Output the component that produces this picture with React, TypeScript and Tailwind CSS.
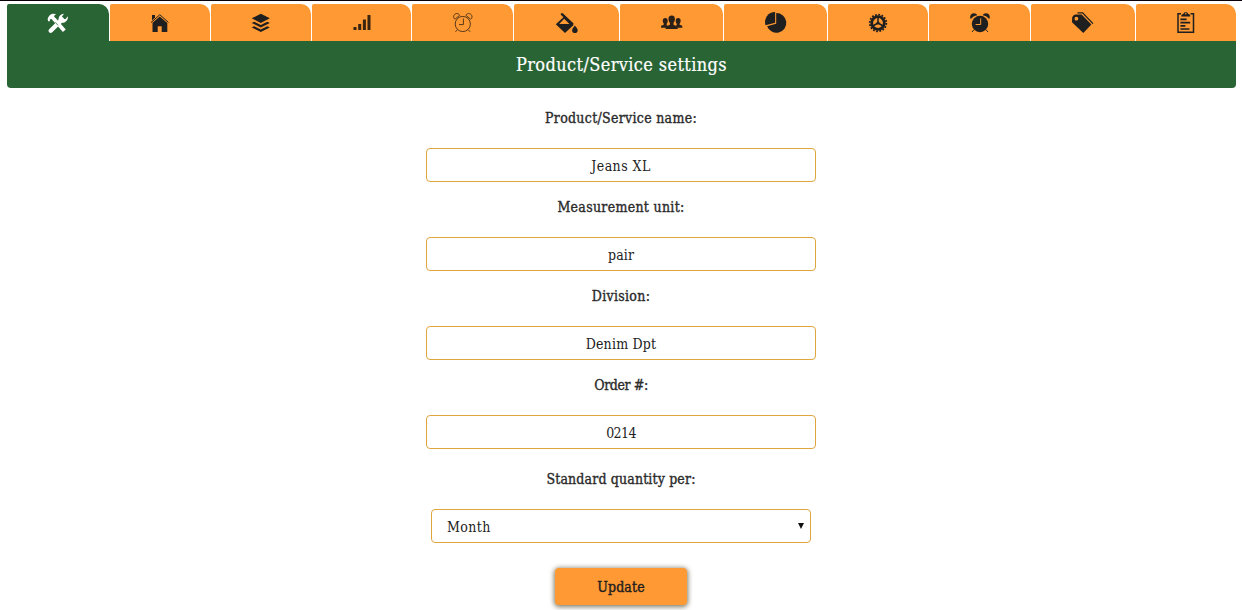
import React from "react";

const ink = "#1f1f1f";

const Tools = () => (
  <svg width="24" height="24" viewBox="0 0 24 24" fill="none">
    <path d="M2.2 10.2 L1.6 8.2 C2 5.8 4 3.4 6.5 2.8 L10 3 L8 5 L9.6 8 L7.6 10 L5.4 8 L4 8.3 L3.8 10.2 Z" fill="#fff" />
    <path d="M8 8 L18.3 19.8" stroke="#fff" strokeWidth="3.8" />
    <path d="M4.7 19.7 L16 8.6" stroke="#fff" strokeWidth="4.4" strokeLinecap="round" />
    <path d="M12.6 10 C12.2 6 14 3 18 2.7 L16 5.6 L17.3 8 L19.6 8 L21.8 5.2 C22.4 9 19.5 12.4 15.2 11.6 Z" fill="#fff" />
    <path d="M9.3 11.2 L12 14.4" stroke="#296435" strokeWidth=".7" />
  </svg>
);
const Home = () => (
  <svg width="24" height="24" viewBox="0 0 24 24" fill={ink}>
    <path d="M4 4h3v2.5L4 9.4Z" />
    <path d="M3 11.6 L11.8 3.7 L20.4 11.4" fill="none" stroke={ink} strokeWidth="1" />
    <path d="M4.5 11.8 L11.8 5.4 L19.3 12 V21 H13.7 V15.2 H9.7 V21 H4.5Z" />
  </svg>
);
const Layers = () => (
  <svg width="24" height="24" viewBox="0 0 24 24" fill={ink}>
    <path d="M11.8 2.8 L20.8 7.3 L11.8 11.9 L2.7 7.3Z" />
    <path d="M2.7 11.9 L5.2 10.7 L11.8 14.1 L18.3 10.7 L20.8 11.9 L11.8 16.5Z" />
    <path d="M2.7 16.4 L5.2 15.2 L11.8 18.5 L18.3 15.2 L20.8 16.4 L11.8 21Z" />
  </svg>
);
const Signal = () => (
  <svg width="24" height="24" viewBox="0 0 24 24" fill="#3a2410">
    <path d="M3.5 16h3v3h-3zM8.2 13h3v6h-3zM12.9 8.4h3V19h-3zM17.5 4h3v15h-3z" />
  </svg>
);
const ClockOutline = () => (
  <svg width="24" height="24" viewBox="0 0 24 24" fill="none" stroke="#59391a" strokeWidth="1">
    <circle cx="11.8" cy="13" r="7.6" />
    <path d="M12.4 7.5v6.1H8M6.4 18.6l-1.9 2.2M17.2 18.6l1.9 2.2M4.1 8.1l4.6-3.8M14.9 4.3l4.6 3.8" />
    <path d="M4 8.2C1.8 7.2 2.2 3.2 5.2 2.6 6.7 2.3 8 3 8.7 4.3M19.6 8.2c2.2-1 1.8-5-1.2-5.6-1.5-.3-2.8.4-3.5 1.7" />
  </svg>
);
const Fill = () => (
  <svg width="24" height="24" viewBox="0 0 24 24" fill={ink}>
    <path d="M6.9 3.2 L17.3 12.8" stroke={ink} strokeWidth="2.4" strokeLinecap="round" />
    <path fillRule="evenodd" d="M9.3 5.5 L18.6 14.1 L10 22 L.8 13.2Z M9.2 7.8 L4.2 13h10.2Z" />
    <path d="M19.9 14.4c1 1.5 2.8 3 2.8 4.9a2.8 2.8 0 0 1-5.6 0c0-1.9 1.8-3.4 2.8-4.9Z" />
  </svg>
);
const Users = () => (
  <svg width="24" height="24" viewBox="0 0 24 24" fill="#2b2018">
    <path d="M5.2 7c1.7 0 2.6 1.1 2.5 3-.1 1.4-.6 2.3-1 2.8v1.5l1.1.6-2 1.8H1c0-1.5.2-2 1.2-2.4l1.6-.6v-1C3.3 12 2.8 11 2.7 9.8 2.7 8.1 3.6 7 5.2 7Z" />
    <path d="M18.2 7c-1.7 0-2.6 1.1-2.5 3 .1 1.4.6 2.3 1 2.8v1.5l-1.1.6 2 1.8h4.8c0-1.5-.2-2-1.2-2.4l-1.6-.6v-1c.5-.7 1-1.7 1.1-2.9 0-1.7-.9-2.8-2.5-2.8Z" />
    <path d="M11.7 4.4c2.3 0 3.4 1.5 3.2 3.9-.1 1.7-.8 3-1.4 3.5v2l2.9 1.2c1.1.5 1.4 1.1 1.4 3.1H5.6c0-2 .3-2.6 1.4-3.1l2.9-1.2v-2C9.3 11.3 8.6 10 8.5 8.3c-.2-2.4 1-3.9 3.2-3.9Z" />
  </svg>
);
const Pie = () => (
  <svg width="24" height="24" viewBox="0 0 24 24" fill={ink}>
    <path d="M12.2 2a9.9 9.9 0 1 1-9.1 13.2l9.1-2.4Z" />
    <path d="M11.1 1v10.8L1.6 14.3A10 10 0 0 1 11.1 1Z" />
  </svg>
);
const Gear = () => (
  <svg width="24" height="24" viewBox="0 0 24 24" fill="none" stroke={ink}>
    <circle cx="12" cy="12" r="8.3" strokeWidth="1.8" strokeDasharray="1.79 1.47" />
    <circle cx="12" cy="12" r="6.3" strokeWidth="2.8" />
    <path d="M12 12V6M12 12l5.2 3M12 12l-5.2 3" strokeWidth="1.5" />
    <circle cx="12" cy="12" r="1.5" fill={ink} stroke="none" />
  </svg>
);
const Alarm = () => (
  <svg width="24" height="24" viewBox="0 0 24 24" fill={ink}>
    <circle cx="12" cy="13" r="8.2" />
    <path d="M2.8 8.1C1.3 5.5 2.8 2.2 5.8 2.2c1.7 0 3 .8 3.5 2C6.4 4.7 4.4 6 2.8 8.1ZM21.2 8.1c1.5-2.6 0-5.9-3-5.9-1.7 0-3 .8-3.5 2 2.9.5 4.9 1.8 6.5 3.9Z" />
    <path d="M6 18.7l-1.9 2.2M18 18.7l1.9 2.2" stroke={ink} strokeWidth="1" />
    <path d="M12.7 7.3v6.2H7.6" fill="none" stroke="#ff9933" strokeWidth="1" />
  </svg>
);
const Tag = () => (
  <svg width="24" height="24" viewBox="0 0 24 24" fill={ink}>
    <path fillRule="evenodd" d="M1.2 6.2 Q2 4.2 4.2 3.6 H10.6 L20.4 13.6 L12.3 22 L1 11.2Z M5.4 5.8a1.9 1.9 0 1 0 0 3.8 1.9 1.9 0 0 0 0-3.8Z" />
    <path d="M6.5 1.8h5.2L21.9 12.6" fill="none" stroke={ink} strokeWidth="1.3" />
  </svg>
);
const Clipboard = () => (
  <svg width="24" height="24" viewBox="0 0 24 24" fill="none" stroke={ink}>
    <path d="M7 2.8H4v18.4h15.5V2.8h-3" strokeWidth="1.5" />
    <path d="M7.2 5.4h9.2c0-1.3-.7-2-2.2-2.3C14 .5 9.6.5 9.4 3.1c-1.5.3-2.2 1-2.2 2.3Z" fill={ink} stroke="none" />
    <circle cx="11.8" cy="2.8" r=".8" fill="#ff9933" stroke="none" />
    <path d="M6.4 8.3h6.2M6.4 11.7h9.8M6.4 14.9h5M6.4 18h9" strokeWidth="1.7" />
  </svg>
);

const tabs = [
  { w: "w-[102px]", icon: <Tools /> },
  { w: "w-[100px]", icon: <Home /> },
  { w: "w-[100px]", icon: <Layers /> },
  { w: "w-[99px]", icon: <Signal /> },
  { w: "w-[101px]", icon: <ClockOutline /> },
  { w: "w-[105px]", icon: <Fill /> },
  { w: "w-[103px]", icon: <Users /> },
  { w: "w-[103px]", icon: <Pie /> },
  { w: "w-[100px]", icon: <Gear /> },
  { w: "w-[101px]", icon: <Alarm /> },
  { w: "w-[104px]", icon: <Tag /> },
  { w: "w-[100px]", icon: <Clipboard /> },
];

const fields = [
  { label: "Product/Service name:", value: "Jeans XL", ls: "tracking-[0.3px]", vs: "tracking-[0.45px]" },
  { label: "Measurement unit:", value: "pair", ls: "tracking-[0.3px]", vs: "tracking-[0.1px]" },
  { label: "Division:", value: "Denim Dpt", ls: "tracking-[0.3px]", vs: "tracking-[0.2px]" },
  { label: "Order #:", value: "0214", ls: "tracking-[-0.4px]", vs: "tracking-[-0.6px]" },
];

const labelClass =
  "block h-[40px] text-center text-[14px] leading-[20px] text-[#2b2b2b] [-webkit-text-stroke:0.35px_#2b2b2b]";

export default function App() {
  return (
    <div className="h-[610px] overflow-hidden border-t border-[#0a000a] bg-white font-['Roboto_Slab','DejaVu_Serif_Condensed','DejaVu_Serif',serif] [font-stretch:condensed]">
      <nav className="flex gap-px pt-[3px] pl-[7px]">
        {tabs.map((t, i) => (
          <button
            key={i}
            className={`${t.w} ${i === 0 ? "bg-[#296435]" : "bg-[#ff9933]"} flex h-[37px] shrink-0 justify-center rounded-tl-[2px] rounded-tr-[10px] pt-[7px]`}
          >
            {t.icon}
          </button>
        ))}
      </nav>
      <header className="mr-[6px] ml-[7px] h-[47px] rounded-b-[4px] bg-[#296435] text-center text-[18px] leading-[48px] tracking-[0.38px] text-white [-webkit-text-stroke:0.2px_#fff]">
        Product/Service settings
      </header>
      <form className="flex flex-col items-center pt-[20px]">
        {fields.map((f) => (
          <label key={f.label} className="mb-[15px] block h-[74px]">
            <span className={`${labelClass} ${f.ls}`}>{f.label}</span>
            <input
              defaultValue={f.value}
              className={`${f.vs} block h-[34px] w-[390px] rounded-[4px] border border-[#dfa640] bg-white pt-[2px] text-center text-[14px] text-[#222]`}
            />
          </label>
        ))}
        <label className="block pt-[5px]">
          <span className={`${labelClass} tracking-[0.15px]`}>Standard quantity per:</span>
          <span className="relative block">
            <select className="block h-[34px] w-[380px] appearance-none rounded-[4px] border border-[#dfa640] bg-white pt-[2px] pl-[15px] text-[14px] tracking-[0.4px] text-[#222]">
              <option>Month</option>
            </select>
            <svg className="absolute top-[14px] right-[7px]" width="6" height="6" viewBox="0 0 6 6">
              <path d="M0 0h6L3 6Z" fill="#111" />
            </svg>
          </span>
        </label>
        <button
          type="button"
          className="mt-[25px] h-[37px] w-[132px] rounded-[4px] bg-[#ff9933] pt-[2px] text-[14px] tracking-[0.15px] text-[#1f1f1f] shadow-[0_1px_5px_1px_rgba(60,50,20,0.65)] [-webkit-text-stroke:0.4px_#1f1f1f]"
        >
          Update
        </button>
      </form>
    </div>
  );
}
